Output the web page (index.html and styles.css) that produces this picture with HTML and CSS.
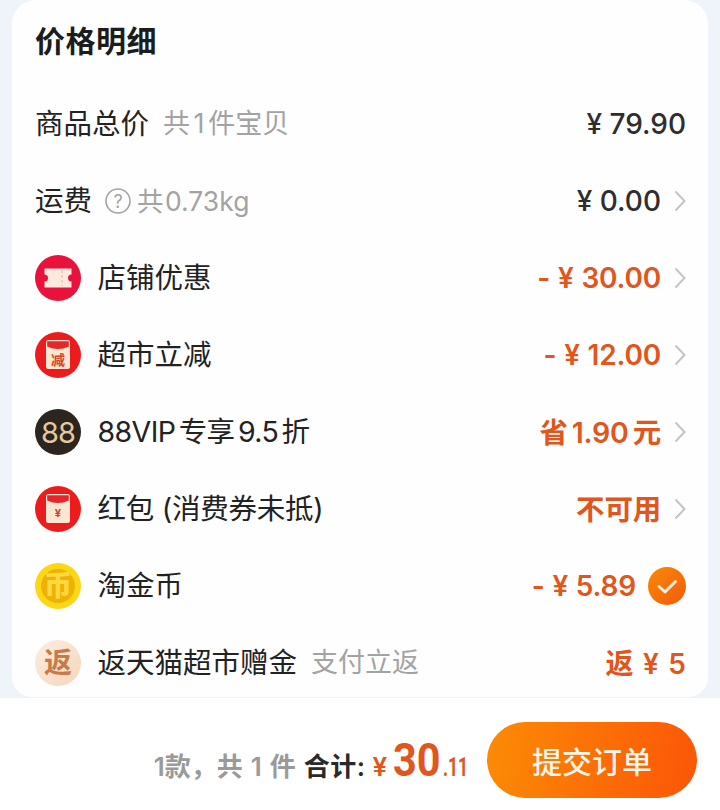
FILE: index.html
```html
<!DOCTYPE html>
<html lang="zh-CN">
<head>
    <meta charset="UTF-8">
    <meta name="viewport" content="width=device-width, initial-scale=1.0">
    <title>价格明细</title>
    <link rel="stylesheet" href="styles.css">
</head>
<body>
    <section class="card">
        <h1 class="title">价格明细</h1>
        <div class="rows">
            <div class="row">
                <div class="label"><span>商品总价</span><span class="hint hint-total">共 1 件宝贝</span></div>
                <div class="amount"><span>¥ 79.90</span></div>
            </div>
            <div class="row">
                <div class="label"><span>运费</span>
                    <svg class="help" viewBox="0 0 26 26"><circle cx="13" cy="13" r="12" fill="none" stroke="#a3a3a3" stroke-width="1.6"/><text x="13" y="19.5" text-anchor="middle" class="help-mark">?</text></svg>
                    <span class="hint hint-weight">共 0.73kg</span>
                </div>
                <div class="amount has-arrow"><span>¥ 0.00</span><svg class="arrow" viewBox="0 0 12 22"><path d="M1.5 1.5 L10.5 11 L1.5 20.5"/></svg></div>
            </div>
            <div class="row">
                <div class="label">
                    <svg class="icon" viewBox="0 0 46 46">
                        <circle cx="23" cy="23" r="23" fill="#e8123c"/>
                        <path d="M9.5 13.5 H36.5 V19.5 A3.5 3.5 0 0 0 36.5 26.5 V32.5 H9.5 V26.5 A3.5 3.5 0 0 0 9.5 19.5 Z" fill="#fbe9de"/>
                        <path d="M27 15.5 V31" stroke="#eebfb0" stroke-width="1.6" stroke-dasharray="2.4 2.4"/>
                    </svg>
                    <span>店铺优惠</span>
                </div>
                <div class="amount orange has-arrow"><span>- ¥ 30.00</span><svg class="arrow" viewBox="0 0 12 22"><path d="M1.5 1.5 L10.5 11 L1.5 20.5"/></svg></div>
            </div>
            <div class="row">
                <div class="label">
                    <svg class="icon" viewBox="0 0 46 46">
                        <circle cx="23" cy="23" r="23" fill="#ec1c1c"/>
                        <rect x="11" y="8" width="24" height="29" rx="2.5" fill="#fbe6d2"/>
                        <path d="M12.2 9.2 H33.8 V14.4 Q23 19.6 12.2 14.4 Z" fill="#e8262a"/>
                        <text x="23" y="33" text-anchor="middle" class="packet-text">减</text>
                    </svg>
                    <span>超市立减</span>
                </div>
                <div class="amount orange has-arrow"><span>- ¥ 12.00</span><svg class="arrow" viewBox="0 0 12 22"><path d="M1.5 1.5 L10.5 11 L1.5 20.5"/></svg></div>
            </div>
            <div class="row">
                <div class="label">
                    <svg class="icon" viewBox="0 0 46 46">
                        <circle cx="23" cy="23" r="23" fill="#2c241f"/>
                        <text x="23" y="33.5" text-anchor="middle" class="vip-text">88</text>
                    </svg>
                    <span class="vip-label">88VIP 专享 9.5 折</span>
                </div>
                <div class="amount orange cjk has-arrow"><span>省 1.90 元</span><svg class="arrow" viewBox="0 0 12 22"><path d="M1.5 1.5 L10.5 11 L1.5 20.5"/></svg></div>
            </div>
            <div class="row">
                <div class="label">
                    <svg class="icon" viewBox="0 0 46 46">
                        <circle cx="23" cy="23" r="23" fill="#ec1c1c"/>
                        <rect x="11" y="8" width="24" height="29" rx="2.5" fill="#fbe6d2"/>
                        <path d="M12.2 9.2 H33.8 V14.4 Q23 19.6 12.2 14.4 Z" fill="#e8262a"/>
                        <text x="23" y="31" text-anchor="middle" class="packet-yen">¥</text>
                    </svg>
                    <span class="packet-label">红包 (消费券未抵)</span>
                </div>
                <div class="amount orange cjk has-arrow"><span>不可用</span><svg class="arrow" viewBox="0 0 12 22"><path d="M1.5 1.5 L10.5 11 L1.5 20.5"/></svg></div>
            </div>
            <div class="row">
                <div class="label">
                    <svg class="icon" viewBox="0 0 46 46">
                        <circle cx="23" cy="23" r="23" fill="#fbd714"/>
                        <circle cx="23" cy="23" r="17" fill="#eeb10a"/>
                        <text x="23" y="33" text-anchor="middle" class="coin-text">币</text>
                    </svg>
                    <span>淘金币</span>
                </div>
                <div class="amount orange has-check"><span>- ¥ 5.89</span>
                    <svg class="check" viewBox="0 0 38 38">
                        <defs><linearGradient id="check-fill" x1="0" y1="0" x2="1" y2="1"><stop offset="0" stop-color="#f98a06"/><stop offset="1" stop-color="#f35a0a"/></linearGradient></defs>
                        <circle cx="19" cy="19" r="19" fill="url(#check-fill)"/>
                        <path d="M11 19.5 L17 25 L27.5 14.5" fill="none" stroke="#fdeedd" stroke-width="3" stroke-linecap="round" stroke-linejoin="round"/>
                    </svg>
                </div>
            </div>
            <div class="row">
                <div class="label">
                    <svg class="icon" viewBox="0 0 46 46">
                        <defs><linearGradient id="back-fill" x1="0" y1="0" x2="1" y2="1"><stop offset="0" stop-color="#fbeee2"/><stop offset="1" stop-color="#f6d5b8"/></linearGradient></defs>
                        <circle cx="23" cy="23" r="23" fill="url(#back-fill)"/>
                        <text x="23" y="33" text-anchor="middle" class="back-text">返</text>
                    </svg>
                    <span>返天猫超市赠金</span><span class="hint hint-back">支付立返</span>
                </div>
                <div class="amount orange back-amount"><span>返 ¥ 5</span></div>
            </div>
        </div>
    </section>
    <footer class="bar">
        <div class="summary">
            <span class="count">1款，共 1 件</span>
            <span class="sum-label">合计:</span>
            <span class="yen">¥</span><span class="big">30</span><span class="cents">.11</span>
        </div>
        <button class="submit">提交订单</button>
    </footer>
</body>
</html>
```

FILE: styles.css
```css
* {
    box-sizing: border-box;
    margin: 0;
    padding: 0;
}

body {
    height: 810px;
    overflow: hidden;
    background: #eff3fa;
    color: #222;
    font-family: "Inter", "Noto Sans CJK SC", sans-serif;
}

.card {
    margin: 0 12px;
    height: 697px;
    padding: 19px 22px 12px 23px;
    background: #fefefe;
    border-radius: 24px 24px 20px 20px;
}

.title {
    height: 44px;
    margin-bottom: 39px;
    font-size: 30px;
    font-weight: 700;
    letter-spacing: .5px;
    line-height: 44px;
    color: #1c1c1c;
}

.rows {
    display: flex;
    flex-direction: column;
    gap: 33px;
}

.row {
    display: flex;
    align-items: center;
    justify-content: space-between;
    height: 44px;
}

.label {
    display: flex;
    align-items: center;
    font-size: 28.5px;
    line-height: 44px;
    white-space: pre;
}

.hint {
    color: #a3a3a3;
    font-size: 27px;
}

.hint-total {
    margin-left: 14px;
    word-spacing: -4px;
}

.hint-weight {
    margin-left: 6px;
    word-spacing: -6px;
    font-size: 26.5px;
}

.hint-back {
    margin-left: 14px;
}

.help {
    width: 26px;
    height: 26px;
    margin-left: 13px;
}

.help-mark {
    font-size: 18px;
    fill: #a3a3a3;
}

.icon {
    flex: none;
    width: 46px;
    height: 46px;
    margin-right: 16.5px;
}

.vip-label {
    letter-spacing: -.6px;
    word-spacing: -4px;
}

.packet-label {
    letter-spacing: -.25px;
}

.packet-text {
    font-size: 14px;
    font-weight: 700;
    fill: #d8402c;
}

.packet-yen {
    font-size: 11px;
    font-weight: 700;
    fill: #d8402c;
}

.vip-text {
    font-size: 29px;
    letter-spacing: -1px;
    fill: #e6c8a0;
}

.coin-text {
    font-size: 28px;
    font-weight: 900;
    fill: #fbd93c;
}

.back-text {
    font-size: 28px;
    font-weight: 700;
    fill: #c77a4a;
}

.amount {
    display: flex;
    align-items: center;
    font-size: 28px;
    font-weight: 500;
    color: #2e2e2e;
    white-space: pre;
}

.orange {
    color: #e0561c;
    font-weight: 600;
    letter-spacing: -.2px;
    word-spacing: 1px;
}

.cjk {
    font-size: 28.5px;
    word-spacing: -3px;
}

.cjk span {
    margin-bottom: 3px;
}

.back-amount {
    word-spacing: 2px;
    letter-spacing: .2px;
}

.back-amount span {
    margin-bottom: 2px;
}

.arrow {
    width: 12px;
    height: 22px;
    margin-left: 13px;
}

.arrow path {
    fill: none;
    stroke: #c4c4c4;
    stroke-width: 2;
}

.check {
    width: 38px;
    height: 38px;
    margin-left: 12px;
}

.bar {
    display: flex;
    align-items: center;
    justify-content: flex-end;
    height: 113px;
    padding: 11px 23px 0 0;
    background: #fff;
    border-top: 1px solid #f2f2f4;
}

.summary {
    display: flex;
    align-items: baseline;
    margin-right: 18px;
    white-space: pre;
}

.count {
    font-size: 26px;
    font-weight: 600;
    color: #9a9a9a;
    margin-right: 8px;
    word-spacing: 1.5px;
}

.sum-label {
    font-size: 26px;
    font-weight: 600;
    color: #2a2a2a;
    margin-right: 7px;
    letter-spacing: .5px;
}

.yen {
    font-size: 26px;
    font-weight: 600;
    color: #e0561c;
    margin-right: 6px;
}

.big {
    display: inline-block;
    font-family: "Roboto", sans-serif;
    font-size: 46px;
    font-weight: 700;
    color: #e0561c;
    transform: scaleX(.9);
    transform-origin: left;
    margin-right: -3px;
}

.cents {
    display: inline-block;
    font-family: "Roboto", sans-serif;
    font-size: 25px;
    font-weight: 700;
    color: #e0561c;
    transform: scaleX(.7);
    transform-origin: left;
    margin-right: -10px;
}

.submit {
    width: 210px;
    height: 76px;
    border: 0;
    border-radius: 38px;
    background: linear-gradient(100deg, #fb8c05, #fb5508);
    color: #fff6e8;
    font-family: inherit;
    font-size: 30px;
    font-weight: 500;
}
```
